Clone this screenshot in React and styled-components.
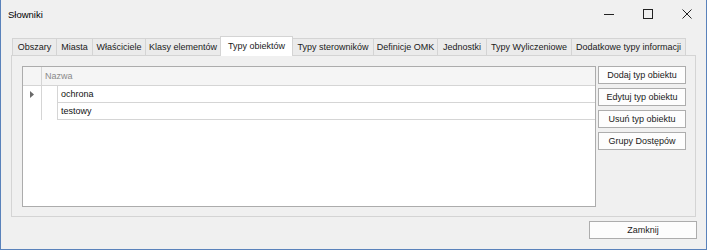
import React from "react";
import styled, { createGlobalStyle, css } from "styled-components";

const GlobalStyle = createGlobalStyle`
  body {
    margin: 0;
    background: #f0f0f0;
    font-family: "Liberation Sans", Arial, sans-serif;
    font-size: 9px;
    color: #111;
  }
`;

const Window = styled.div`
  width: 707px;
  height: 250px;
  box-sizing: border-box;
  border: 1px solid #5a82bb;
  border-top: none;
  background: #f0f0f0;
  display: flex;
  flex-direction: column;
`;

const TitleBar = styled.div`
  height: 28px;
  display: flex;
  align-items: center;
  padding-left: 7px;
`;

const Title = styled.div`
  flex: 1;
  font-size: 9.5px;
  color: #000;
`;

const WinButton = styled.div`
  width: 39px;
  height: 28px;
  display: flex;
  align-items: center;
  justify-content: center;
`;

const Body = styled.div`
  flex: 1;
  display: flex;
  flex-direction: column;
  padding: 8px 10px 0 10px;
`;

const TabStrip = styled.div`
  display: flex;
  align-items: flex-end;
  height: 20px;
  padding-left: 1px;
  margin-bottom: -1px;
  position: relative;
  z-index: 1;
`;

const Tab = styled.div`
  box-sizing: border-box;
  width: ${(p) => p.$w}px;
  height: 17px;
  margin: 0 -1px 1px 0;
  border: 1px solid #d4d4d4;
  border-bottom: none;
  background: #ebebeb;
  display: flex;
  align-items: center;
  justify-content: center;
  white-space: nowrap;
  color: #1a1a1a;
  ${(p) =>
    p.$active &&
    css`
      height: 20px;
      margin-bottom: 0;
      background: #ffffff;
      position: relative;
      z-index: 2;
      padding-bottom: 2px;
    `}
`;

const Panel = styled.div`
  height: 162px;
  box-sizing: border-box;
  border: 1px solid #d4d4d4;
  background: #f0f0f0;
  padding: 10px 9px 9px 10px;
  display: flex;
  gap: 2px;
`;

const Grid = styled.div`
  flex: 1;
  border: 1px solid #acacac;
  background: #fff;
  display: flex;
  flex-direction: column;
`;

const Row = styled.div`
  display: flex;
  height: ${(p) => (p.$header ? 19 : 17)}px;
  box-sizing: border-box;
  ${(p) =>
    p.$header &&
    css`
      background: #f5f5f5;
      border-bottom: 1px solid #d5d5d5;
      color: #8a8a8a;
    `}
`;

const RowHead = styled.div`
  width: 19px;
  flex: none;
  box-sizing: border-box;
  border-right: 1px solid #d5d5d5;
  display: flex;
  align-items: center;
  justify-content: center;
`;

const Indent = styled.div`
  width: 16px;
  flex: none;
  box-sizing: border-box;
  border-right: 1px solid #d5d5d5;
`;

const Cell = styled.div`
  flex: 1;
  box-sizing: border-box;
  display: flex;
  align-items: center;
  padding-left: ${(p) => (p.$header ? 3 : 3)}px;
  ${(p) => !p.$header && css`border-bottom: 1px solid #d5d5d5;`}
`;

const Side = styled.div`
  width: 88px;
  display: flex;
  flex-direction: column;
  gap: 4px;
`;

const Button = styled.div`
  box-sizing: border-box;
  height: 18px;
  width: ${(p) => p.$w || 88}px;
  border: 1px solid #adadad;
  background: #fdfdfd;
  display: flex;
  align-items: center;
  justify-content: center;
  white-space: nowrap;
  color: #1a1a1a;
`;

const Footer = styled.div`
  display: flex;
  justify-content: flex-end;
  padding: 4px 0 0 0;
  margin-right: -1px;
`;

const tabs = [
  ["Obszary", 45],
  ["Miasta", 37],
  ["Właściciele", 54],
  ["Klasy elementów", 76],
  ["Typy obiektów", 73, true],
  ["Typy sterowników", 82],
  ["Definicje OMK", 65],
  ["Jednostki", 50],
  ["Typy Wyliczeniowe", 86],
  ["Dodatkowe typy informacji", 115],
];

const rows = ["ochrona", "testowy"];

export default function App() {
  return (
    <>
      <GlobalStyle />
      <Window>
        <TitleBar>
          <Title>Słowniki</Title>
          <WinButton>
            <svg width="10" height="10" viewBox="0 0 10 10">
              <path d="M0 5.5h10" stroke="#222" strokeWidth="1" />
            </svg>
          </WinButton>
          <WinButton>
            <svg width="10" height="10" viewBox="0 0 10 10">
              <rect x="0.5" y="0.5" width="9" height="9" fill="none" stroke="#222" />
            </svg>
          </WinButton>
          <WinButton>
            <svg width="10" height="10" viewBox="0 0 10 10">
              <path d="M0.5 0.5l9 9M9.5 0.5l-9 9" stroke="#222" strokeWidth="1" />
            </svg>
          </WinButton>
        </TitleBar>
        <Body>
          <TabStrip>
            {tabs.map(([label, w, active]) => (
              <Tab key={label} $w={w} $active={active}>
                {label}
              </Tab>
            ))}
          </TabStrip>
          <Panel>
            <Grid>
              <Row $header>
                <RowHead />
                <Cell $header>Nazwa</Cell>
              </Row>
              {rows.map((name, i) => (
                <Row key={name}>
                  <RowHead>
                    {i === 0 && (
                      <svg width="4" height="7" viewBox="0 0 4 7">
                        <path d="M0 0l4 3.5L0 7z" fill="#6a6a6a" />
                      </svg>
                    )}
                  </RowHead>
                  <Indent />
                  <Cell>{name}</Cell>
                </Row>
              ))}
            </Grid>
            <Side>
              <Button>Dodaj typ obiektu</Button>
              <Button>Edytuj typ obiektu</Button>
              <Button>Usuń typ obiektu</Button>
              <Button>Grupy Dostępów</Button>
            </Side>
          </Panel>
          <Footer>
            <Button $w={108}>Zamknij</Button>
          </Footer>
        </Body>
      </Window>
    </>
  );
}
